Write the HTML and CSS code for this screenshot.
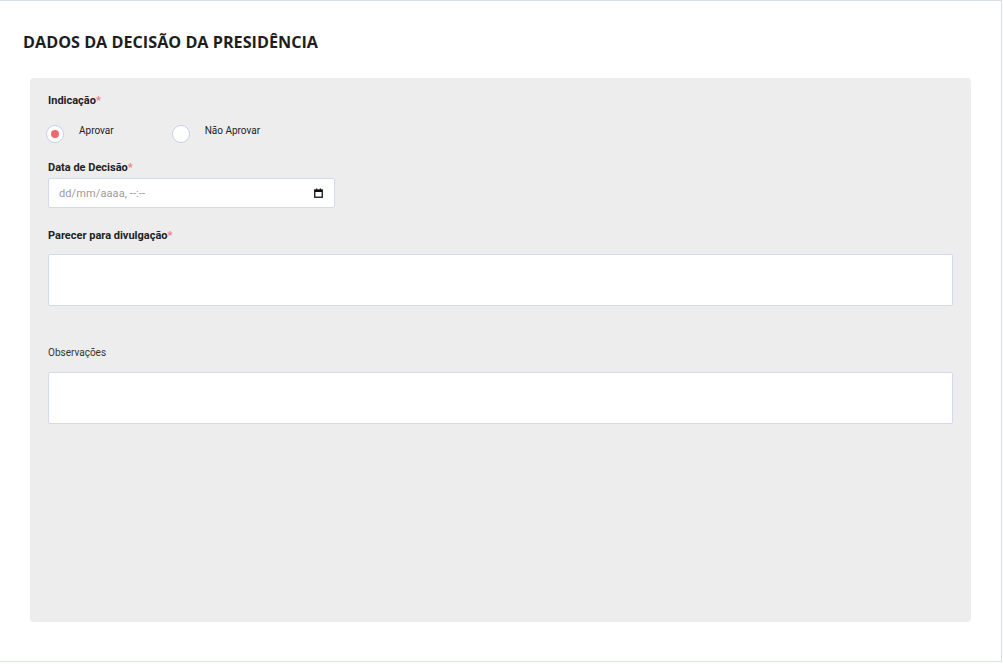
FILE: index.html
```html
<!DOCTYPE html>
<html lang="pt-BR">
<head>
    <meta charset="UTF-8">
    <meta name="viewport" content="width=device-width, initial-scale=1.0">
    <title>Dados da Decisão da Presidência</title>
    <link rel="stylesheet" href="styles.css">
</head>
<body>
    <div class="page">
        <h1 class="page-title">DADOS DA DECISÃO DA PRESIDÊNCIA</h1>

        <div class="form-panel">
            <div class="field-label">Indicação<span class="required">*</span></div>
            <div class="radio-group">
                <div class="radio-option">
                    <span class="radio checked"></span>
                    <span class="radio-text">Aprovar</span>
                </div>
                <div class="radio-option">
                    <span class="radio"></span>
                    <span class="radio-text">Não Aprovar</span>
                </div>
            </div>

            <div class="field-label label-date">Data de Decisão<span class="required">*</span></div>
            <div class="date-input">
                <span class="date-placeholder">dd/mm/aaaa, --:--</span>
                <svg class="date-icon" width="9" height="10" viewBox="0 0 9 10">
                    <rect x="0.75" y="2" width="7.5" height="7.25" fill="none" stroke="#111" stroke-width="1.3"/>
                    <rect x="0.75" y="2" width="7.5" height="2" fill="#111"/>
                    <rect x="2" y="0.5" width="1.2" height="2" fill="#111"/>
                    <rect x="5.8" y="0.5" width="1.2" height="2" fill="#111"/>
                </svg>
            </div>

            <div class="field-label label-parecer">Parecer para divulgação<span class="required">*</span></div>
            <div class="text-box"></div>

            <div class="field-label label-obs light">Observações</div>
            <div class="text-box box-obs"></div>
        </div>
    </div>
</body>
</html>
```

FILE: styles.css
```css
* {
    box-sizing: border-box;
}
body {
    margin: 0;
    font-family: Roboto, 'Liberation Sans', Arial, sans-serif;
    background: #ffffff;
}
.page {
    width: 1002px;
    height: 662px;
    border-top: 1px solid #d9dfea;
    border-right: 1px solid #d9dfea;
    border-bottom: 1px solid #d9dfea;
    padding-top: 29px;
}
.page-title {
    margin: 0 0 24px 23px;
    font-family: 'Open Sans', 'Liberation Sans', sans-serif;
    font-size: 16.2px;
    font-weight: 700;
    line-height: 24px;
    color: #1e1e1e;
}
.form-panel {
    margin-left: 30px;
    width: 941px;
    height: 544px;
    background: #ededed;
    border-radius: 4px;
    padding: 15px 18px 0 18px;
}
.field-label {
    font-size: 11px;
    font-weight: 700;
    line-height: 16px;
    color: #222;
}
.field-label.light {
    font-size: 10px;
    font-weight: 400;
    color: #333;
}
.required {
    color: #f47c80;
}
.radio-group {
    display: flex;
    gap: 58px;
    margin-top: 12px;
    margin-left: -2px;
}
.radio-option {
    display: flex;
    align-items: flex-start;
}
.radio {
    width: 18px;
    height: 18px;
    margin-top: 4px;
    border: 1px solid #c9d1e8;
    border-radius: 50%;
    background: #fff;
    display: flex;
    align-items: center;
    justify-content: center;
}
.radio.checked::after {
    content: "";
    width: 8px;
    height: 8px;
    border-radius: 50%;
    background: #f0676d;
}
.radio-text {
    margin-left: 15px;
    margin-top: 2px;
    font-size: 10px;
    line-height: 16px;
    color: #222;
}
.label-date {
    margin-top: 17px;
}
.date-input {
    margin-top: 2px;
    width: 287px;
    height: 30px;
    background: #fff;
    border: 1px solid #d3daee;
    border-radius: 2px;
    display: flex;
    align-items: center;
    justify-content: space-between;
    padding: 0 11px 0 10px;
}
.date-placeholder {
    font-size: 11px;
    color: #9b9b9b;
    letter-spacing: 0.1px;
}
.date-icon {
    display: block;
}
.label-parecer {
    margin-top: 20px;
}
.text-box {
    margin-top: 10px;
    width: 905px;
    height: 52px;
    background: #fff;
    border: 1px solid #d3daee;
    border-radius: 2px;
}
.label-obs {
    margin-top: 39px;
}
.box-obs {
    margin-top: 11px;
}
```
